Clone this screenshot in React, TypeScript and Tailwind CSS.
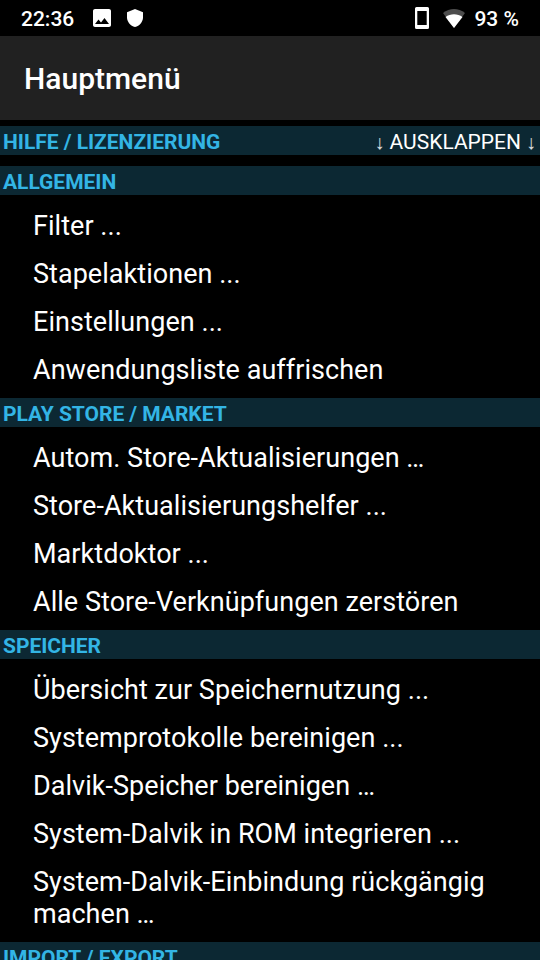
import React from 'react';

interface MenuSection {
  title: string;
  hint?: string;
  items: string[];
}

const sections: MenuSection[] = [
  { title: 'HILFE / LIZENZIERUNG', hint: 'AUSKLAPPEN', items: [] },
  {
    title: 'ALLGEMEIN',
    items: ['Filter ...', 'Stapelaktionen ...', 'Einstellungen ...', 'Anwendungsliste auffrischen'],
  },
  {
    title: 'PLAY STORE / MARKET',
    items: [
      'Autom. Store-Aktualisierungen …',
      'Store-Aktualisierungshelfer ...',
      'Marktdoktor ...',
      'Alle Store-Verknüpfungen zerstören',
    ],
  },
  {
    title: 'SPEICHER',
    items: [
      'Übersicht zur Speichernutzung ...',
      'Systemprotokolle bereinigen ...',
      'Dalvik-Speicher bereinigen …',
      'System-Dalvik in ROM integrieren ...',
      'System-Dalvik-Einbindung rückgängig machen …',
    ],
  },
  { title: 'IMPORT / EXPORT', items: [] },
];

const StatusBar: React.FC = () => (
  <div className="h-9 flex items-center justify-between px-[21px] text-[21px] font-medium shrink-0">
    <div className="flex items-center">
      <span className="w-[72px] pt-[3px]">22:36</span>
      <svg className="w-[18px] h-[18px]" viewBox="3 3 18 18" fill="currentColor">
        <path d="M21 19V5c0-1.1-.9-2-2-2H5c-1.1 0-2 .9-2 2v14c0 1.1.9 2 2 2h14c1.1 0 2-.9 2-2zM8.500 13.500l2.500 3.010L14.500 12l4.500 6H5l3.500-4.500z" />
      </svg>
      <svg className="ml-4 w-4 h-[18px]" viewBox="3 1 18 22" fill="currentColor" preserveAspectRatio="none">
        <path d="M12 1L3 5v6c0 5.550 3.840 10.740 9 12 5.160-1.260 9-6.450 9-12V5l-9-4z" />
      </svg>
    </div>
    <div className="flex items-center">
      <svg className="w-[14px] h-[22px]" viewBox="0 0 14 22" fill="currentColor">
        <path fillRule="evenodd" d="M1.500 0h11Q14 0 14 1.500v19Q14 22 12.500 22h-11Q0 22 0 20.500v-19Q0 0 1.500 0zM2.300 4v14h9.400V4z" />
      </svg>
      <svg className="ml-[14px] w-[22px] h-[19px]" viewBox="0 0 22 19" fill="currentColor">
        <path fillOpacity="0.3" d="M0 4C6.500-1.300 15.500-1.300 22 4L11 19z" />
        <path d="M2.500 8c5-3.600 12-3.600 17 0L11 19z" />
      </svg>
      <span className="ml-[9px] pt-[3px]">93 %</span>
    </div>
  </div>
);

const Arrow: React.FC = () => (
  <span className="w-2 flex justify-center text-[20px] text-white/85 font-['Liberation_Serif',serif]">↓</span>
);

const Section: React.FC<{ section: MenuSection }> = ({ section }) => (
  <section>
    <div className="h-[29px] pt-0.5 pl-[3px] pr-[5px] flex items-center justify-between bg-[#0c2833] text-[21px] leading-7">
      <h2 className="font-bold text-[#33b5e5] tracking-[-0.03px]">{section.title}</h2>
      {section.hint && (
        <span className="flex items-center gap-1.5">
          <Arrow />
          {section.hint}
          <Arrow />
        </span>
      )}
    </div>
    {section.items.length > 0 ? (
      <ul className="pt-[7px] pb-1">
        {section.items.map((item) => (
          <li key={item} className="pl-[33px] pr-8 py-2 text-[27px] leading-8 tracking-[0.04px]">
            {item}
          </li>
        ))}
      </ul>
    ) : (
      <div className="h-[11px]" />
    )}
  </section>
);

export default function App() {
  return (
    <div className="w-[540px] h-[960px] overflow-hidden flex flex-col bg-black text-white font-['Roboto','Noto_Sans',sans-serif]">
      <StatusBar />
      <header className="h-[84px] shrink-0 px-6 flex items-center bg-[#212121]">
        <h1 className="text-[30px] font-medium">Hauptmenü</h1>
      </header>
      <main className="pt-1.5">
        {sections.map((section) => (
          <Section key={section.title} section={section} />
        ))}
      </main>
    </div>
  );
}
